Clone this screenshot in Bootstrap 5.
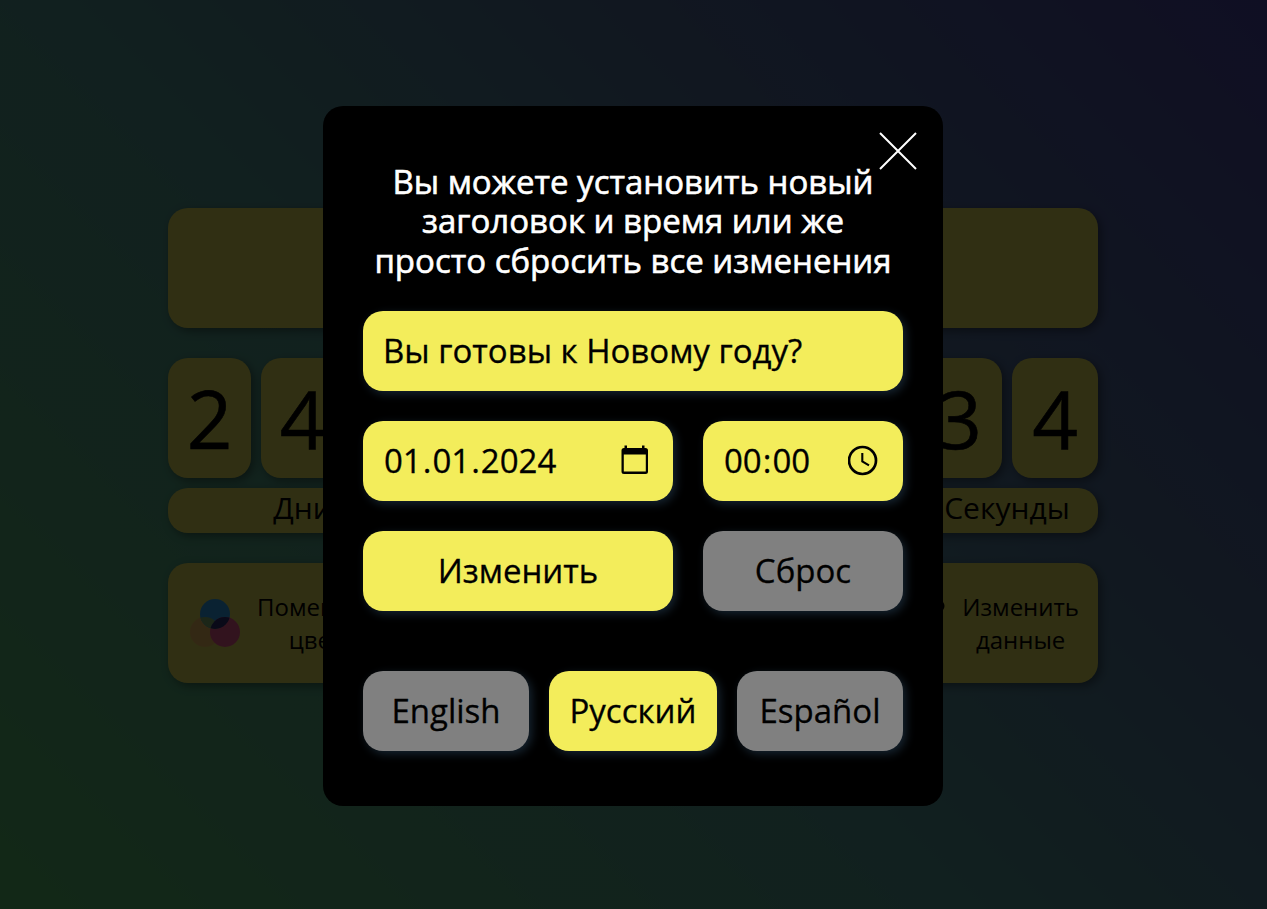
<!DOCTYPE html>
<html lang="ru">
<head>
<meta charset="utf-8">
<meta name="viewport" content="width=device-width, initial-scale=1">
<title>Таймер</title>
<link href="https://cdn.jsdelivr.net/npm/bootstrap@5.3.0/dist/css/bootstrap.min.css" rel="stylesheet">
<style>
:root { --accent: #f3ed5b; --panel: #f0e95e; }
body { font-family: "Open Sans", "Noto Sans", sans-serif; color: #000; background: linear-gradient(45deg, #5ac873 0%, #58a09b 44%, #5578a0 68%, #4e4baf 100%); }
.timer-page { padding: 0 1px 18px 0; }
.timer { width: 930px; gap: 30px; }
.tile { background: var(--panel); border-radius: 20px; box-shadow: 3px 3px 10px rgba(0,0,0,.4); }
.tile-lg { height: 120px; }
.unit-group { display: flex; flex-direction: column; gap: 10px; }
.digits { display: flex; gap: 10px; }
.digit { width: 86px; font-size: 80px; line-height: 120px; text-align: center; -webkit-text-stroke: .6px #000; }
.days .digit { width: 83px; }
.unit { height: 45px; font-size: 30px; line-height: 39px; text-align: center; }
.tool { width: 225px; padding: 0 19px 0 22px; font-size: 24px; line-height: 33px; }
.shade { background: rgba(0,0,0,.8); padding-right: 1px; }
.dialog-box { width: 620px; height: 700px; border-radius: 20px; padding: 56px 40px 0; top: 1px; }
.dialog-title { font-size: 33px; line-height: 39.6px; font-weight: 500; -webkit-text-stroke: .6px #fff; }
.field { height: 80px; border: 0; border-radius: 20px; background: var(--accent); color: #000; font-size: 33px; padding: 0 20px 2px; box-shadow: 3px 3px 10px rgba(54,91,121,.4); white-space: nowrap; -webkit-text-stroke: .3px #000; }
.field-digits { padding: 0 21px 2px; }
.field-digits i { font-style: normal; padding: 0 1px; }
.field-muted { background: gray; }
.col-wide { width: 310px; }
.col-slim { width: 200px; }
.lang { width: 166px; }
.lang-active { width: 168px; }
.lang-row { margin-top: 60px; }
.form-rows { gap: 30px; margin-top: 31px; }
.close-x { top: 26px; right: 26px; }
</style>
</head>
<body class="vh-100 overflow-hidden">
<main class="timer-page vh-100 d-flex justify-content-center align-items-center">
  <div class="timer d-flex flex-column">
    <div class="tile tile-lg"></div>
    <div class="d-flex justify-content-between">
      <div class="unit-group days">
        <div class="digits"><div class="tile tile-lg digit">2</div><div class="tile tile-lg digit">4</div><div class="tile tile-lg digit"></div></div>
        <div class="tile unit">Дни</div>
      </div>
      <div class="unit-group">
        <div class="digits"><div class="tile tile-lg digit">3</div><div class="tile tile-lg digit">4</div></div>
        <div class="tile unit">Секунды</div>
      </div>
    </div>
    <div class="d-flex justify-content-between">
      <div class="tile tile-lg tool d-flex align-items-center justify-content-between">
        <svg width="50" height="50" viewBox="0 0 50 50">
          <defs><clipPath id="blueDisc"><circle cx="25" cy="16" r="15"/></clipPath></defs>
          <circle cx="15" cy="34" r="15" fill="#ffc864"/>
          <circle cx="25" cy="16" r="15" fill="#32aafa"/>
          <circle cx="35" cy="34" r="15" fill="#fa5f96"/>
          <g clip-path="url(#blueDisc)"><circle cx="15" cy="34" r="15" fill="#8cbe78"/><circle cx="35" cy="34" r="15" fill="#323278"/></g>
        </svg>
        <div class="text-center">Поменять<br>цвет</div>
      </div>
      <div class="tile tile-lg tool d-flex align-items-center justify-content-between">
        <svg width="50" height="50" viewBox="0 0 50 50"><path d="M4 44 7 30 36 0q4-2 8 0l4 4q3 4 0 8L16 41Z"/></svg>
        <div class="text-center">Изменить<br>данные</div>
      </div>
    </div>
  </div>
</main>
<div class="shade position-fixed top-0 start-0 w-100 h-100 d-flex justify-content-center align-items-center">
  <section class="dialog-box bg-black position-relative">
    <svg class="close-x position-absolute" width="38" height="38" stroke="#fff" stroke-width="2"><path d="M1 1 37 37M37 1 1 37"/></svg>
    <h1 class="dialog-title text-white text-center mb-0">Вы можете установить новый<br>заголовок и время или же<br>просто сбросить все изменения</h1>
    <div class="form-rows d-flex flex-column">
      <div class="field d-flex align-items-center">Вы готовы к Новому году?</div>
      <div class="d-flex justify-content-between">
        <div class="field field-digits col-wide d-flex align-items-center justify-content-between"><span>01<i>.</i>01<i>.</i>2024</span>
          <svg width="34" height="34" viewBox="0 0 34 34"><path d="M6.500 2.500H9V5h15V2.500h2.500V5h1q2.500 0 2.500 2.500v21q0 2.500-2.500 2.500H6q-2.500 0-2.500-2.500v-21Q3.500 5 6 5h.5ZM5.800 11.500v17h22v-17Z" fill-rule="evenodd"/></svg>
        </div>
        <div class="field field-digits col-slim d-flex align-items-center justify-content-between"><span>00<i>:</i>00</span>
          <svg width="34" height="34" viewBox="0 0 34 34" fill="none" stroke="#000"><circle cx="14.500" cy="17.500" r="13.500" stroke-width="2.700"/><path d="M14.300 10v8.500L21 22.300" stroke-width="2.100"/></svg>
        </div>
      </div>
      <div class="d-flex justify-content-between">
        <button class="field col-wide">Изменить</button>
        <button class="field field-muted col-slim">Сброс</button>
      </div>
    </div>
    <div class="lang-row d-flex justify-content-between">
      <button class="field field-muted lang">English</button>
      <button class="field lang-active">Русский</button>
      <button class="field field-muted lang">Español</button>
    </div>
  </section>
</div>
<script src="https://cdn.jsdelivr.net/npm/bootstrap@5.3.0/dist/js/bootstrap.bundle.min.js"></script>
</body>
</html>
